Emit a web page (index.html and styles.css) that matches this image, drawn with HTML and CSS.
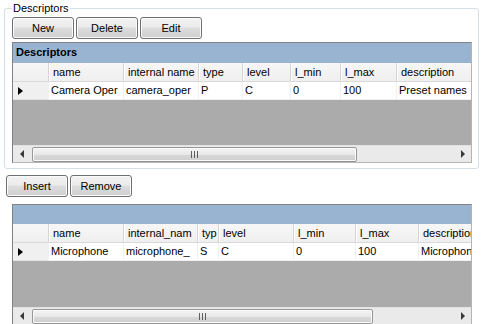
FILE: index.html
```html
<!DOCTYPE html>
<html>
<head>
<meta charset="utf-8">
<link rel="stylesheet" href="styles.css">
</head>
<body>
<fieldset class="group">
  <legend class="group-title">Descriptors</legend>
  <div class="toolbar">
    <button class="btn">New</button>
    <button class="btn">Delete</button>
    <button class="btn">Edit</button>
  </div>
  <div class="grid grid-a">
    <div class="caption">Descriptors</div>
    <div class="row head">
      <div class="rh"></div>
      <div class="hc">name</div>
      <div class="hc">internal name</div>
      <div class="hc">type</div>
      <div class="hc">level</div>
      <div class="hc">l_min</div>
      <div class="hc">l_max</div>
      <div class="hc last">description</div>
    </div>
    <div class="row data">
      <div class="rh"><span class="cur"></span></div>
      <div class="dc">Camera Oper</div>
      <div class="dc">camera_oper</div>
      <div class="dc">P</div>
      <div class="dc">C</div>
      <div class="dc">0</div>
      <div class="dc">100</div>
      <div class="dc last">Preset names</div>
    </div>
    <div class="empty"></div>
    <div class="hscroll">
      <div class="arrow"><span class="tri tri-left"></span></div>
      <div class="track"><div class="thumb thumb-a"><span class="grip"></span></div></div>
      <div class="arrow"><span class="tri tri-right"></span></div>
    </div>
  </div>
</fieldset>

<div class="toolbar toolbar-outer">
  <button class="btn">Insert</button>
  <button class="btn">Remove</button>
</div>

<div class="grid grid-b">
  <div class="caption"></div>
  <div class="row head">
    <div class="rh"></div>
    <div class="hc">name</div>
    <div class="hc">internal_nam</div>
    <div class="hc">typ</div>
    <div class="hc">level</div>
    <div class="hc">l_min</div>
    <div class="hc">l_max</div>
    <div class="hc last">description</div>
  </div>
  <div class="row data">
    <div class="rh"><span class="cur"></span></div>
    <div class="dc">Microphone</div>
    <div class="dc">microphone_</div>
    <div class="dc">S</div>
    <div class="dc">C</div>
    <div class="dc">0</div>
    <div class="dc">100</div>
    <div class="dc last">Microphone</div>
  </div>
  <div class="empty"></div>
  <div class="hscroll">
    <div class="arrow"><span class="tri tri-left"></span></div>
    <div class="track"><div class="thumb thumb-b"><span class="grip"></span></div></div>
    <div class="arrow"><span class="tri tri-right"></span></div>
  </div>
</div>
</body>
</html>
```

FILE: styles.css
```css
* { box-sizing: border-box; }

html, body {
  margin: 0;
  padding: 0;
  background: #ffffff;
}

body {
  width: 485px;
  height: 324px;
  overflow: hidden;
  font-family: "Liberation Sans", Arial, sans-serif;
  font-size: 11px;
  color: #000;
}

.group {
  margin: 2px 6px 0 4px;
  padding: 2px 6px 5px 7px;
  border: 1px solid #d5dfe5;
  border-radius: 3px;
  min-width: 0;
}

.group-title {
  padding: 0 1px;
  line-height: 13px;
  font-size: 11px;
}

.toolbar {
  display: flex;
  gap: 2px;
  height: 22px;
}

.toolbar-outer {
  margin: 6px 0 0 6px;
}

.btn {
  width: 62px;
  height: 22px;
  margin: 0;
  padding: 0;
  font-family: "Liberation Sans", Arial, sans-serif;
  font-size: 11px;
  color: #000;
  border: 1px solid #707070;
  border-radius: 3px;
  background: linear-gradient(#f2f2f2 0%, #ebebeb 45%, #dddddd 50%, #cfcfcf 100%);
  box-shadow: inset 0 0 0 1px #fbfbfb;
}

.grid {
  width: 460px;
  height: 121px;
  margin-top: 3px;
  display: flex;
  flex-direction: column;
  border: 1px solid #828282;
  border-right-color: #b4b4b4;
  border-bottom-color: #b4b4b4;
  background: #ababab;
  overflow: hidden;
}

.grid-b {
  margin: 7px 0 0 12px;
}

.caption {
  height: 20px;
  flex: none;
  background: #99b4d1;
  font-weight: bold;
  line-height: 19px;
  padding-left: 3px;
}

.grid-b .caption {
  height: 19px;
}

.row {
  display: grid;
  flex: none;
}

.grid-a .row {
  grid-template-columns: 35px 75px 75px 44px 48px 50px 56px 75px;
}

.grid-b .row {
  grid-template-columns: 35px 75px 74px 21px 75px 62px 63px 53px;
}

.head {
  height: 19px;
  background: linear-gradient(#f7f7f7, #efefef);
  border-bottom: 1px solid #d9d9d9;
}

.hc {
  padding-left: 4px;
  line-height: 18px;
  white-space: nowrap;
  overflow: hidden;
  border-left: 1px solid #d5d5d5;
  box-shadow: inset 1px 0 0 #ffffff;
}

.data {
  height: 18px;
}

.data .rh {
  background: #f0f0f0;
  border-bottom: 1px solid #e4e4e4;
  display: flex;
  align-items: center;
  padding-left: 5px;
}

.cur {
  width: 0;
  height: 0;
  border-top: 4px solid transparent;
  border-bottom: 4px solid transparent;
  border-left: 5px solid #000;
}

.dc {
  background: #ffffff;
  padding-left: 2px;
  line-height: 17px;
  white-space: nowrap;
  overflow: hidden;
  border-left: 1px solid #f0f0f0;
  border-bottom: 1px solid #f0f0f0;
}

.empty {
  flex: 1;
  background: #ababab;
}

.hscroll {
  height: 17px;
  flex: none;
  display: flex;
  background: #eaeaea;
  border-top: 1px solid #e2e2e2;
}

.arrow {
  width: 17px;
  flex: none;
  display: flex;
  align-items: center;
  justify-content: center;
}

.tri {
  width: 0;
  height: 0;
  border-top: 4px solid transparent;
  border-bottom: 4px solid transparent;
}

.tri-left {
  border-right: 4px solid #3a3a3a;
}

.tri-right {
  border-left: 4px solid #3a3a3a;
}

.track {
  flex: 1;
  display: flex;
  align-items: center;
}

.thumb {
  height: 15px;
  margin-left: 2px;
  border: 1px solid #979797;
  border-radius: 2px;
  background: linear-gradient(#f4f4f4 0%, #e8e8e8 50%, #d8d8d8 51%, #cfcfcf 100%);
  box-shadow: inset 0 0 0 1px #fafafa;
  display: flex;
  align-items: center;
  justify-content: center;
}

.thumb-a { width: 325px; }
.thumb-b { width: 341px; }

.grip {
  width: 7px;
  height: 7px;
  background: repeating-linear-gradient(90deg, #5e5e5e 0 1px, transparent 1px 3px);
}
```
